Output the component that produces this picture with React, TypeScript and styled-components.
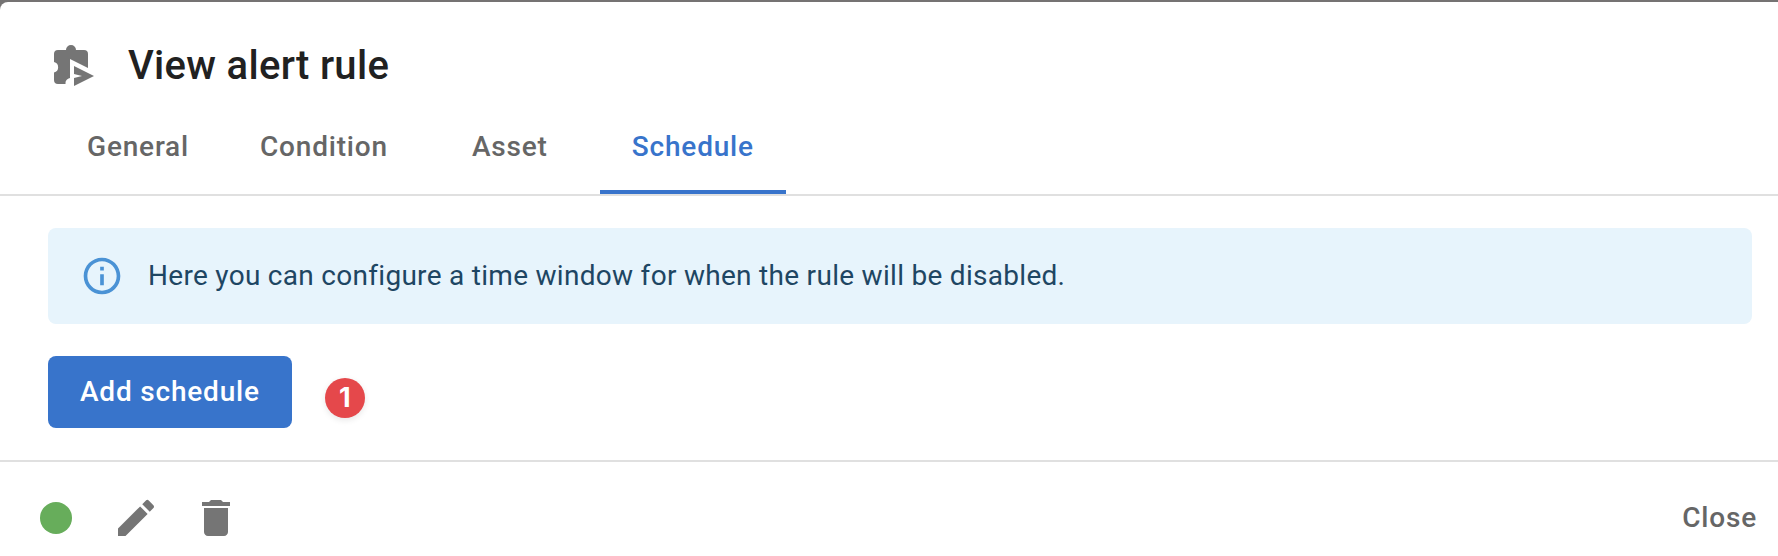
import React, { useState } from 'react';
import styled, { createGlobalStyle } from 'styled-components';

const GlobalStyle = createGlobalStyle`
  *, *::before, *::after { box-sizing: border-box; }
  body {
    margin: 0;
    background: #757373;
    font-family: Roboto, sans-serif;
    color: #212121;
  }
`;

const Backdrop = styled.div`
  height: 100vh;
  padding-top: 2px;
  display: flex;
  overflow: hidden;
`;

const Dialog = styled.section`
  flex: 1;
  min-width: 0;
  display: flex;
  flex-direction: column;
  background: #fff;
  border-top-left-radius: 8px;
`;

const Header = styled.header`
  height: 96px;
  padding: 32px 48px 0;
  display: flex;
  align-items: flex-start;
  gap: 32px;
`;

const HeaderIcon = styled.svg`
  width: 48px;
  height: 48px;
  margin-top: 6px;
  fill: #757575;
  flex: none;
`;

const Title = styled.h1`
  margin: 0;
  font-size: 40px;
  font-weight: 500;
  line-height: 64px;
  letter-spacing: 0.3px;
`;

const TabList = styled.nav`
  display: flex;
  height: 98px;
  padding-left: 48px;
  border-bottom: 2px solid #e0e0e0;
`;

const Tab = styled.button<{ $active: boolean }>`
  min-width: 180px;
  height: 96px;
  padding: 4px 32px 0;
  border: 0;
  border-bottom: 4px solid ${(p) => (p.$active ? '#3874cb' : 'transparent')};
  background: none;
  color: ${(p) => (p.$active ? '#3874cb' : '#666')};
  font: 500 28px/35px Roboto, sans-serif;
  letter-spacing: 0.8px;
`;

const Content = styled.main`
  flex: 1;
  padding: 32px 26px 0 48px;
`;

const Alert = styled.div`
  height: 96px;
  padding: 0 32px;
  display: flex;
  align-items: center;
  gap: 24px;
  border-radius: 8px;
  background: #e7f4fc;
  color: #1e4663;
  font-size: 28px;
  line-height: 40px;
  letter-spacing: 0.29px;
`;

const InfoIcon = styled.svg`
  width: 44px;
  height: 44px;
  fill: #4a92d5;
  flex: none;
`;

const Actions = styled.div`
  margin-top: 32px;
  display: flex;
  align-items: flex-start;
  gap: 32px;
`;

const PrimaryButton = styled.button`
  height: 72px;
  padding: 0 32px;
  border: 0;
  border-radius: 8px;
  background: #3874cb;
  color: #fff;
  font: 500 28px/48px Roboto, sans-serif;
  letter-spacing: 0.8px;
`;

const StepBadge = styled.span`
  width: 40px;
  height: 40px;
  margin: 22px 0 0 1px;
  display: flex;
  align-items: center;
  justify-content: center;
  border-radius: 50%;
  background: #e5484b;
  color: #fff;
  font: 700 27px/40px Inter, sans-serif;
  box-shadow: 0 2px 6px rgba(0, 0, 0, 0.1);
`;

const Footer = styled.footer`
  height: 96px;
  flex: none;
  border-top: 2px solid #e0e0e0;
  padding: 20px 21px 0 40px;
  display: flex;
  align-items: flex-start;
`;

const StatusDot = styled.span`
  width: 32px;
  height: 32px;
  margin: 20px 40px 0 0;
  border-radius: 50%;
  background: #67ad5b;
`;

const IconButton = styled.button`
  width: 48px;
  height: 48px;
  margin: 12px 32px 0 0;
  padding: 0;
  border: 0;
  background: none;

  svg {
    display: block;
    width: 48px;
    height: 48px;
    fill: #757575;
  }
`;

const TextButton = styled.button`
  margin: 12px 0 0 auto;
  padding: 0;
  border: 0;
  background: none;
  color: #666;
  font: 500 28px/48px Roboto, sans-serif;
  letter-spacing: 0.8px;
`;

const tabs = ['General', 'Condition', 'Asset', 'Schedule'];

export default function App() {
  const [active, setActive] = useState('Schedule');
  return (
    <>
      <GlobalStyle />
      <Backdrop>
        <Dialog>
          <Header>
            <HeaderIcon viewBox="0 0 48 48">
              <path d="M10 10h8a5 5 0 0 1 10 0h8a4 4 0 0 1 4 4v14L22 19v19a5.3 5.3 0 0 0-4.500 6H10a4 4 0 0 1-4-4v-7.500a5.400 5.400 0 0 0 0-10.500V14a4 4 0 0 1 4-4Z" />
              <path d="M26 26l20 10-20 10v-8l8-2-8-2Z" />
            </HeaderIcon>
            <Title>View alert rule</Title>
          </Header>
          <TabList>
            {tabs.map((t) => (
              <Tab key={t} $active={t === active} onClick={() => setActive(t)}>{t}</Tab>
            ))}
          </TabList>
          <Content>
            <Alert>
              <InfoIcon viewBox="0 0 24 24">
                <path d="M11 7h2v2h-2zm0 4h2v6h-2zm1-9C6.480 2 2 6.480 2 12s4.480 10 10 10 10-4.480 10-10S17.520 2 12 2m0 18c-4.410 0-8-3.590-8-8s3.590-8 8-8 8 3.590 8 8-3.590 8-8 8" />
              </InfoIcon>
              <span>Here you can configure a time window for when the rule will be disabled.</span>
            </Alert>
            <Actions>
              <PrimaryButton>Add schedule</PrimaryButton>
              <StepBadge>1</StepBadge>
            </Actions>
          </Content>
          <Footer>
            <StatusDot />
            <IconButton aria-label="Edit">
              <svg viewBox="0 0 24 24">
                <path d="M3 17.250V21h3.750L17.810 9.940l-3.750-3.750zM20.710 7.040c.39-.39.39-1.020 0-1.410l-2.340-2.340a.996.996 0 0 0-1.410 0l-1.830 1.830 3.750 3.750z" />
              </svg>
            </IconButton>
            <IconButton aria-label="Delete">
              <svg viewBox="0 0 24 24">
                <path d="M6 19c0 1.100.9 2 2 2h8c1.100 0 2-.9 2-2V7H6zM19 4h-3.500l-1-1h-5l-1 1H5v2h14z" />
              </svg>
            </IconButton>
            <TextButton>Close</TextButton>
          </Footer>
        </Dialog>
      </Backdrop>
    </>
  );
}
